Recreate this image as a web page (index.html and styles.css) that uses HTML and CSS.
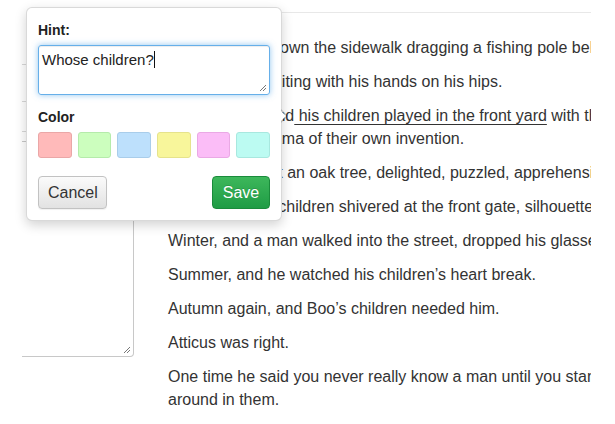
FILE: index.html
```html
<!DOCTYPE html>
<html>
<head>
<meta charset="utf-8">
<link rel="stylesheet" href="styles.css">
</head>
<body>
<div class="page">
  <aside class="side">
    <div class="side-row row-a"></div>
    <div class="side-row row-b"></div>
    <div class="side-row row-c"></div>
    <div class="side-box">
      <svg class="grip" width="9" height="9" viewBox="0 0 9 9"><path d="M8 2 L2 8 M8 5 L5 8" stroke="#777" stroke-width="1" fill="none"/></svg>
    </div>
  </aside>
  <main class="main">
    <div class="story">
      <p>A boy trudged down the sidewalk dragging a fishing pole behind him.</p>
      <p>A man stood waiting with his hands on his hips.</p>
      <p>Summertime, and<span class="mark"> his children played in the front yard</span> with their friend, enacting a strange little drama of their own invention.</p>
      <p>They stopped at an oak tree, delighted, puzzled, apprehensive.</p>
      <p>Winter, and his children shivered at the front gate, silhouetted against a blazing house.</p>
      <p>Winter, and a man walked into the street, dropped his glasses, and shot a dog.</p>
      <p>Summer, and he watched his children’s heart break.</p>
      <p>Autumn again, and Boo’s children needed him.</p>
      <p>Atticus was right.</p>
      <p>One time he said you never really know a man until you stand in his shoes and walk around in them.</p>
    </div>
  </main>
</div>

<div class="popover">
  <div class="arrow"></div>
  <label class="label">Hint:</label>
  <div class="hint-input">Whose children?<span class="caret"></span>
    <svg class="grip grip-in" width="9" height="9" viewBox="0 0 9 9"><path d="M8 2 L2 8 M8 5 L5 8" stroke="#777" stroke-width="1" fill="none"/></svg>
  </div>
  <label class="label label-color">Color</label>
  <div class="swatches">
    <span class="swatch sw-red"></span>
    <span class="swatch sw-green"></span>
    <span class="swatch sw-blue"></span>
    <span class="swatch sw-yellow"></span>
    <span class="swatch sw-pink"></span>
    <span class="swatch sw-cyan"></span>
  </div>
  <div class="actions">
    <button class="btn btn-cancel">Cancel</button>
    <button class="btn btn-save">Save</button>
  </div>
</div>
</body>
</html>
```

FILE: styles.css
```css
html, body {
  margin: 0;
  padding: 0;
  background: #fff;
}
body {
  font-family: "Liberation Sans", Arial, Helvetica, sans-serif;
  color: #333;
  width: 615px;
  height: 424px;
  overflow: hidden;
  position: relative;
}
.page {
  display: flex;
  align-items: flex-start;
}
.side {
  width: 112px;
  margin-left: 22px;
  padding-top: 64px;
  display: flex;
  flex-direction: column;
}
.side-row {
  border-top: 1px solid #d8d8d8;
}
.row-a { height: 36px; }
.row-b { height: 29px; }
.row-c { height: 9px; }
.side-box {
  height: 214px;
  border: 1px solid #c8c8c8;
  border-left: none;
  border-radius: 0 0 4px 0;
  position: relative;
}
.grip {
  position: absolute;
  right: 2px;
  bottom: 2px;
}
.main {
  margin-left: 16px;
  margin-top: 12px;
  width: 441px;
  border-top: 1px solid #e8e8e8;
  overflow: hidden;
}
.story {
  width: 624px;
  padding: 23px 0 0 18px;
  font-size: 16px;
  line-height: 23px;
}
.story p {
  margin: 0 0 11px;
}
.mark {
  text-decoration: underline;
  text-decoration-color: #333;
  text-underline-offset: 3px;
  text-decoration-thickness: 1px;
}

/* popover */
.popover {
  position: absolute;
  left: 26px;
  top: 7px;
  width: 256px;
  box-sizing: border-box;
  padding: 12px 11px 11px 11px;
  background: #fff;
  border: 1px solid rgba(0,0,0,0.15);
  border-radius: 6px;
  box-shadow: 0 4px 12px rgba(0,0,0,0.18);
}
.arrow {
  position: absolute;
  right: -7px;
  top: 101px;
  width: 0;
  height: 0;
  border-top: 7px solid transparent;
  border-bottom: 7px solid transparent;
  border-left: 7px solid rgba(0,0,0,0.18);
}
.arrow::after {
  content: "";
  position: absolute;
  left: -8px;
  top: -6px;
  border-top: 6px solid transparent;
  border-bottom: 6px solid transparent;
  border-left: 6px solid #fff;
}
.label {
  display: block;
  font-size: 14px;
  font-weight: bold;
  line-height: 20px;
  color: #222;
}
.hint-input {
  margin-top: 5px;
  height: 50px;
  box-sizing: border-box;
  padding: 4px 3px;
  font-size: 15px;
  line-height: 20px;
  color: #222;
  border: 1px solid #66afe9;
  border-radius: 3px;
  box-shadow: inset 0 1px 1px rgba(0,0,0,0.075), 0 0 6px rgba(102,175,233,0.7);
  position: relative;
}
.caret {
  display: inline-block;
  width: 1px;
  height: 17px;
  background: #111;
  vertical-align: -3px;
}
.grip-in {
  right: 2px;
  bottom: 2px;
}
.label-color {
  margin-top: 12px;
}
.swatches {
  display: flex;
  gap: 6px;
  margin-top: 5px;
}
.swatch {
  flex: 1;
  height: 26px;
  box-sizing: border-box;
  border-radius: 3px;
  border: 1px solid rgba(0,0,0,0.08);
}
.sw-red { background: #ffbaba; border-color: #eaa7a7; }
.sw-green { background: #ccfebe; border-color: #b5ebab; }
.sw-blue { background: #bde0fc; border-color: #a9cdea; }
.sw-yellow { background: #f8f69b; border-color: #e6e38c; }
.sw-pink { background: #fbbdf7; border-color: #eaa9e5; }
.sw-cyan { background: #bcfbf2; border-color: #a8e8df; }
.actions {
  display: flex;
  justify-content: space-between;
  margin-top: 18px;
}
.btn {
  height: 33px;
  box-sizing: border-box;
  padding: 0 9px;
  font-family: "Liberation Sans", Arial, Helvetica, sans-serif;
  font-size: 16px;
  border-radius: 4px;
  cursor: pointer;
}
.btn-cancel {
  width: 69px;
  color: #333;
  background: linear-gradient(#fbfbfb, #e2e2e2);
  border: 1px solid #c2c2c2;
  box-shadow: 0 1px 1px rgba(0,0,0,0.06);
}
.btn-save {
  width: 58px;
  color: #fff;
  background: linear-gradient(#3db75b, #1f9c45);
  border: 1px solid #1a8b3b;
  text-shadow: 0 -1px 0 rgba(0,0,0,0.15);
}
```
